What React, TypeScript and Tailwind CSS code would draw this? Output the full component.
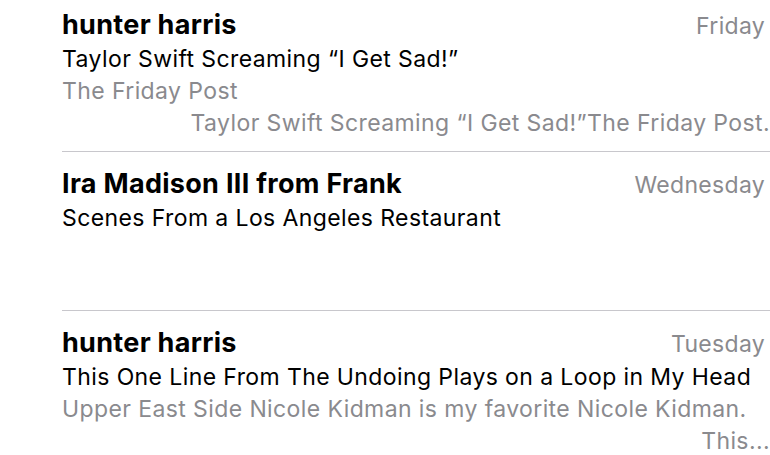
import React from 'react';

type Mail = {
  sender: string;
  date: string;
  subject: string;
  preview: string[];
};

const mails: Mail[] = [
  {
    sender: 'hunter harris',
    date: 'Friday',
    subject: 'Taylor Swift Screaming \u201CI Get Sad!\u201D',
    preview: ['The Friday Post', 'Taylor Swift Screaming \u201CI Get Sad!\u201DThe Friday Post.'],
  },
  {
    sender: 'Ira Madison III from Frank',
    date: 'Wednesday',
    subject: 'Scenes From a Los Angeles Restaurant',
    preview: [],
  },
  {
    sender: 'hunter harris',
    date: 'Tuesday',
    subject: 'This One Line From The Undoing Plays on a Loop in My Head',
    preview: ['Upper East Side Nicole Kidman is my favorite Nicole Kidman.', 'This...'],
  },
];

export default function App() {
  return (
    <div
      className="w-[770px] h-[455px] overflow-hidden bg-white pl-[62px]"
      style={{ fontFamily: 'Inter, "Noto Sans", sans-serif' }}
    >
      {mails.map((m, i) => (
        <div
          key={i}
          className={`pb-3 ${i === 0 ? 'pt-[7px]' : 'pt-[14px] border-t border-[#c8c7cc]'}`}
        >
          {/* Sender + date */}
          <div className="flex items-baseline justify-between h-9 pr-[5px] leading-9">
            <span className="text-[27px] font-bold text-black tracking-[0.3px]">{m.sender}</span>
            <span className="text-[23px] text-[#8a8a8e] tracking-[0.3px]">{m.date}</span>
          </div>
          {/* Subject */}
          <div className="h-8 flex items-center text-[23px] text-black tracking-[0.4px] whitespace-nowrap">
            {m.subject}
          </div>
          {/* Preview */}
          <div className="h-16 text-[23px] leading-8 text-[#8a8a8e] tracking-[0.4px] whitespace-nowrap">
            {m.preview.map((p, j) => (
              <div key={j} className={j === 0 ? 'text-left' : 'text-right'}>
                {p}
              </div>
            ))}
          </div>
        </div>
      ))}
    </div>
  );
}
